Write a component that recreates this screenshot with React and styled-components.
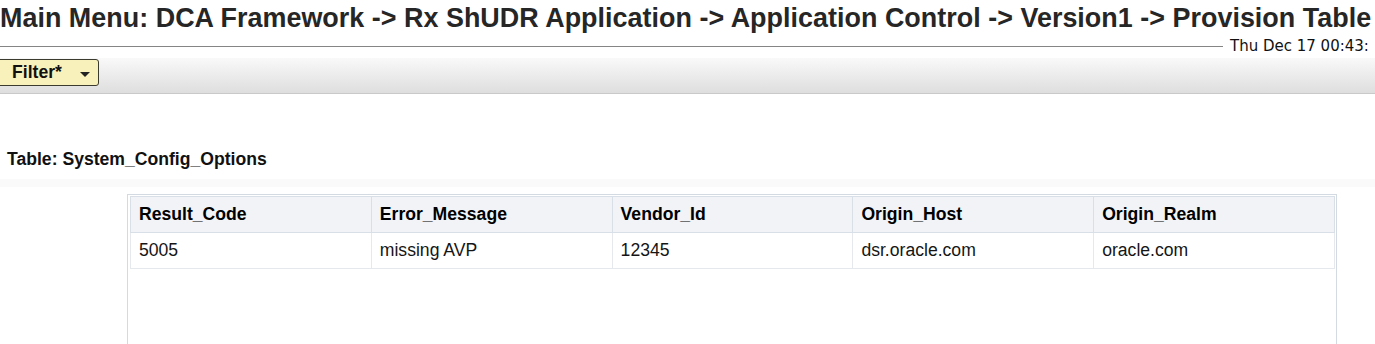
import React from 'react';
import styled, { createGlobalStyle } from 'styled-components';

const GlobalStyle = createGlobalStyle`
  html, body {
    margin: 0;
    padding: 0;
    background: #fff;
    overflow: hidden;
  }
  body {
    font-family: "Liberation Sans", Arial, sans-serif;
    color: #111;
  }
`;

const columns = ['Result_Code', 'Error_Message', 'Vendor_Id', 'Origin_Host', 'Origin_Realm'];
const rows = [['5005', 'missing AVP', '12345', 'dsr.oracle.com', 'oracle.com']];

const Page = styled.div`
  width: 1375px;
`;

const Title = styled.h1`
  margin: 0;
  padding-top: 3px;
  font-size: 26.9px;
  letter-spacing: 0.03px;
  line-height: 30px;
  font-weight: bold;
  color: #262626;
  white-space: nowrap;
`;

const DateRow = styled.div`
  display: flex;
  align-items: center;
  gap: 7px;
  height: 17px;
  margin-top: 5px;
  white-space: nowrap;
`;

const Rule = styled.div`
  flex: 0 0 1223px;
  height: 1px;
  background: #858585;
`;

const Clock = styled.span`
  font-family: "DejaVu Sans", Verdana, sans-serif;
  font-size: 15px;
  line-height: 17px;
  color: #111;
`;

const Toolbar = styled.div`
  display: flex;
  align-items: flex-start;
  height: 34px;
  margin-top: 3px;
  padding-top: 1px;
  background: linear-gradient(#f9f9f9, #dedede);
  border-bottom: 1px solid #c9c9c9;
`;

const FilterButton = styled.button`
  display: flex;
  align-items: center;
  gap: 18px;
  height: 27px;
  margin-left: -3px;
  padding: 0 8px 0 14px;
  box-sizing: border-box;
  border: 1px solid #3b3b30;
  border-radius: 3px;
  background: #f9f1bc;
  font-family: "Liberation Sans", Arial, sans-serif;
  font-size: 17.6px;
  font-weight: bold;
  color: #111;
  cursor: pointer;
`;

const Caret = styled.span`
  width: 0;
  height: 0;
  margin-top: 3px;
  border-left: 5px solid transparent;
  border-right: 5px solid transparent;
  border-top: 5px solid #222;
`;

const TableLabel = styled.div`
  margin-top: 55px;
  padding-left: 7px;
  font-size: 17.6px;
  line-height: 20px;
  font-weight: bold;
  color: #111;
`;

const Band = styled.div`
  height: 8px;
  margin-top: 10px;
  background: #fafafa;
`;

const Frame = styled.div`
  width: 1205px;
  height: 200px;
  margin: 7px 0 0 127px;
  padding: 1px 1px 0 2px;
  border: 1px solid #d3dae2;
`;

const Grid = styled.table`
  width: 1205px;
  border-collapse: collapse;
  table-layout: fixed;
`;

const HeadCell = styled.th`
  height: 35px;
  padding: 0 8px;
  text-align: left;
  vertical-align: middle;
  font-size: 17.6px;
  font-weight: bold;
  color: #000;
  background: #f1f3f7;
  border: 1px solid #d9dfe6;
`;

const Cell = styled.td`
  height: 35px;
  padding: 0 8px;
  vertical-align: middle;
  font-size: 17.6px;
  color: #151515;
  border: 1px solid #e5e8ec;
`;

export default function App() {
  return (
    <Page>
      <GlobalStyle />
      <Title>
        Main Menu: DCA Framework -&gt; Rx ShUDR Application -&gt; Application Control -&gt; Version1 -&gt; Provision Table
      </Title>
      <DateRow>
        <Rule />
        <Clock>Thu Dec 17 00:43:</Clock>
      </DateRow>
      <Toolbar>
        <FilterButton type="button">
          Filter*
          <Caret />
        </FilterButton>
      </Toolbar>
      <TableLabel>Table: System_Config_Options</TableLabel>
      <Band />
      <Frame>
        <Grid>
          <thead>
            <tr>
              {columns.map((c) => (
                <HeadCell key={c}>{c}</HeadCell>
              ))}
            </tr>
          </thead>
          <tbody>
            {rows.map((r, i) => (
              <tr key={i}>
                {r.map((v, j) => (
                  <Cell key={j}>{v}</Cell>
                ))}
              </tr>
            ))}
          </tbody>
        </Grid>
      </Frame>
    </Page>
  );
}
